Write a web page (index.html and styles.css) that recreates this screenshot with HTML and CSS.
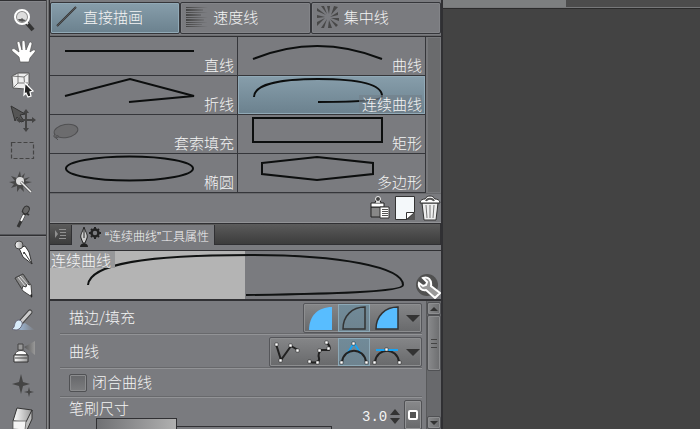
FILE: index.html
```html
<!DOCTYPE html>
<html lang="zh-CN">
<head>
<meta charset="utf-8">
<title>连续曲线</title>
<link rel="stylesheet" href="styles.css">
</head>
<body>
<svg class="defs" aria-hidden="true">
  <defs>
    <linearGradient id="metal"><stop offset="0" stop-color="#fff"/><stop offset="1" stop-color="#999"/></linearGradient>
    <linearGradient id="ink"><stop offset="0" stop-color="#444"/><stop offset="1" stop-color="#444" stop-opacity="0"/></linearGradient>
    <linearGradient id="wash"><stop offset="0" stop-color="#a9cdf5"/><stop offset="1" stop-color="#a9cdf5" stop-opacity="0"/></linearGradient>
    <linearGradient id="spray" x1="1" x2="0"><stop offset="0" stop-color="#999"/><stop offset="1" stop-color="#555"/></linearGradient>
  </defs>
</svg>
<div class="app">
  <nav class="toolbar" aria-label="工具">
    <div class="tools">
      <button aria-label="放大镜"><svg viewBox="0 0 33 33"><path d="M20 20l7 8" stroke="#333" stroke-width="4"/><path d="M20 20l2 2" stroke="#ddd" stroke-width="2"/><circle cx="16" cy="15" r="7" fill="#8d8d8d" stroke="#fff" stroke-width="2"/><circle cx="16" cy="15" r="5" fill="#ddd"/><path d="M12 17c1 3 5 4 8 1-2 0-3-1-4-2l-1 1z" fill="#555"/></svg></button>
      <button aria-label="抓手"><svg viewBox="0 0 33 33"><path d="M14 27l-1-5-7-6c-1-2 1-3 3-2l4 3-2-9c0-2 3-2 3 0l2 7V7c0-2 3-2 3 0l1 8 3-7c1-2 3-1 3 1l-2 8 3-2c2-1 3 1 2 2l-5 6-1 4z" fill="#fff" stroke="#555" stroke-width=".7"/></svg></button>
      <button aria-label="操作"><svg viewBox="0 0 33 33"><path d="M6 8l6-3h11v11l-4 5-12-1z" fill="#eee" stroke="#555"/><path d="M6 8l12 1 5-4M18 9l1 12M12 5v10l-5 5M12 15h10" fill="none" stroke="#777"/><path d="M19 15l8 8-3 1 1 4-3 1-2-4-2 2z" fill="#222" stroke="#fff" stroke-width="1.200"/></svg></button>
      <button aria-label="移动图层"><svg viewBox="0 0 33 33"><path d="M5 5l14 8-5 1 4 6-3 1-4-5-2 4z" fill="#555" stroke="#333"/><path d="M13 19h14M20 11v16" stroke="#444" stroke-width="2"/><path d="M20 8l3 4h-6zM20 31l3-4h-6zM10 19l4-3v6zM30 19l-4-3v6z" fill="#444"/></svg></button>
      <button aria-label="选区"><svg viewBox="0 0 33 33"><rect x="5.500" y="8.500" width="22" height="16" fill="none" stroke="#444" stroke-width="1.200" stroke-dasharray="4 2"/></svg></button>
      <button aria-label="自动选择"><svg viewBox="0 0 33 33"><path d="M14 4l1 6 4-4-2 6 7-2-5 4 7 1-7 2 4 4-6-2 1 6-4-4-3 4v-6l-6 2 3-4-5-2 6-1-4-5 6 2z" fill="#484848"/><circle cx="14" cy="14" r="4" fill="#ddd"/><path d="M15 15l10 10" stroke="#555" stroke-width="3"/><path d="M15 15l10 10" stroke="#eee" stroke-width="1.500"/></svg></button>
      <button aria-label="吸管"><svg viewBox="0 0 33 33"><path d="M19 13l-7 14" stroke="#333" stroke-width="3"/><path d="M18 15l-3 6" stroke="#fff" stroke-width="2"/><path d="M16 11l7 4" stroke="#333" stroke-width="2"/><ellipse cx="20" cy="10" rx="3" ry="4" fill="#666" stroke="#333" transform="rotate(30 20 10)"/></svg></button>
    </div>
    <div class="tools">
      <button aria-label="钢笔"><svg viewBox="0 0 33 33"><path d="M13 11l6-2 4 6 3 12-9-7z" fill="#fff" stroke="#333"/><path d="M18 15l8 12" stroke="#333"/><circle cx="18" cy="16" r="1" fill="#333"/><circle cx="13" cy="8" r="4" fill="url(#metal)" stroke="#444"/></svg></button>
      <button aria-label="铅笔"><svg viewBox="0 0 33 33"><path d="M9 8l8-4 8 11 1 12-9-6z" fill="#fff" stroke="#444"/><path d="M9 8l8-4 7 11-3-1-1 3-3-1-1 3z" fill="#888" stroke="#444"/><path d="M12 7l7 9M14 6l8 9" stroke="#ddd"/><path d="M24 25l2 3v-4z" fill="#222"/></svg></button>
      <button aria-label="毛笔"><svg viewBox="0 0 33 33"><path d="M7 25l12-5 10 7H15z" fill="url(#wash)"/><path d="M15 19L24 9" stroke="#444" stroke-width="5" stroke-linecap="round"/><path d="M15 19L24 9" stroke="#ccc" stroke-width="3" stroke-linecap="round"/><path d="M12 17c3 0 5 2 4 5-2 5-6 6-10 4 4-2 1-7 6-9z" fill="#d8ebfa" stroke="#667"/></svg></button>
      <button aria-label="喷枪"><svg viewBox="0 0 33 33"><path d="M18 11l11-6v14z" fill="url(#spray)"/><path d="M12 8h5v6h-5z" fill="#999" stroke="#444"/><path d="M9 19c0-6 12-6 12 0z" fill="#fff" stroke="#444"/><path d="M8 19h14v7H8z" fill="url(#metal)" stroke="#333"/><path d="M9 22h12" stroke="#444"/></svg></button>
      <button aria-label="装饰"><svg viewBox="0 0 33 33"><path d="M15 5l2 8 7 2-7 2-2 8-2-8-7-2 7-2zM23 18l1 4 4 1-4 1-1 4-1-4-4-1 4-1z" fill="#444"/></svg></button>
      <button aria-label="橡皮擦"><svg viewBox="0 0 33 33"><path d="M11 6l15 2-5 13-14-2z" fill="url(#metal)" stroke="#333"/><path d="M7 19l13 1 6-12v9l-5 11-14-1z" fill="#bbb" stroke="#333"/><path d="M7 19h13l-1 9-12-1z" fill="#f4f4f4" stroke="#777"/></svg></button>
    </div>
  </nav>

  <main class="panel">
    <div class="groups" role="tablist">
      <button class="group selected" role="tab" aria-selected="true"><svg viewBox="0 0 22 22"><path d="M1 20L20 1" stroke="#333" stroke-width="2"/><path d="M1 20L20 1" stroke="#555"/></svg>直接描画</button>
      <button class="group" role="tab"><svg viewBox="0 0 22 22"><path d="M0 1h22v1H0zM0 3h17v2H0zM0 6h22v1H0zM0 8h15v2H0zM0 11h22v1H0zM0 13h18v2H0zM0 16h21v1H0zM0 18h16v1H0zM0 20h22v1H0z" fill="url(#ink)"/></svg>速度线</button>
      <button class="group" role="tab"><svg viewBox="0 0 22 22"><path d="M10 0h3l-1 8zM17 0l4 1-7 8zM21 6v3l-8 2zM22 12v3l-8-3zM21 19l-2 2-6-8zM15 22h-4l1-8zM7 22H4l6-9zM0 20v-4l8-4zM0 12V9l8 2zM0 5V2l9 7zM4 0h3l3 8z" fill="#484848"/></svg>集中线</button>
    </div>

    <div class="library">
      <div class="shapes">
        <button class="shape"><svg viewBox="0 0 187 38"><path d="M15 14h129"/></svg><span>直线</span></button>
        <button class="shape"><svg viewBox="0 0 187 38"><path d="M15 22Q79-4 144 22"/></svg><span>曲线</span></button>
        <button class="shape"><svg viewBox="0 0 187 38"><path d="M15 20L80 3l64 17-65 6"/></svg><span>折线</span></button>
        <button class="shape selected"><svg viewBox="0 0 187 38"><path d="M16 21C16 9 40 3 80 3s64 5 64 17c0 5-29 6-64 6"/></svg><span>连续曲线</span></button>
        <button class="shape"><svg viewBox="0 0 187 38"><g class="lasso"><ellipse cx="16" cy="16" rx="12" ry="6.500" transform="rotate(-10 16 16)"/><path d="M5 19c-3 3 1 5 3 3s-3-2-2 1l2 2"/></g></svg><span>套索填充</span></button>
        <button class="shape"><svg viewBox="0 0 187 38"><path d="M15 3h129v24H15z"/></svg><span>矩形</span></button>
        <button class="shape"><svg viewBox="0 0 187 38"><ellipse cx="79.500" cy="14.500" rx="63.500" ry="12"/></svg><span>椭圆</span></button>
        <button class="shape"><svg viewBox="0 0 187 38"><path d="M24 9l55-6 56 6v11l-56 6-55-6z"/></svg><span>多边形</span></button>
      </div>
      <div class="rail"></div>
    </div>

    <div class="actions">
      <button aria-label="复制子工具"><svg viewBox="0 0 22 26"><path d="M2 12h13v10H2z" fill="#888" stroke="#222"/><path d="M2 8h13v4H2z" fill="#fff" stroke="#222"/><path d="M6 8l1-3h4l1 3" fill="#ccc" stroke="#222"/><circle cx="9" cy="4" r="2.500" fill="#444" stroke="#eee"/><path d="M11 12h9v11h-9z" fill="#fff" stroke="#333"/><path d="M13 14.500h6M13 16.500h6M13 18.500h6M13 20.500h6" stroke="#555"/></svg></button>
      <button aria-label="新建子工具"><svg viewBox="0 0 22 26"><path d="M1.500 1.500h19v16l-7 7h-12z" fill="#f4f8fa" stroke="#333"/><path d="M12.500 24.500v-7h8z" fill="#fff" stroke="#333"/><path d="M13 25l8-8v8z" fill="#555"/></svg></button>
      <button aria-label="删除子工具"><svg viewBox="0 0 22 26"><path d="M3 8h16l-2 17H5z" fill="#eee" stroke="#333"/><path d="M7 10l1 13M11 10v13M15 10l-1 13" stroke="#777"/><path d="M1 8c0-3 3-4 5-4 2-4 8-4 10 0 2 0 5 1 5 4z" fill="#fff" stroke="#333"/><path d="M7 6c1-3 7-3 8 0" fill="none" stroke="#555" stroke-width="2"/></svg></button>
    </div>

    <header class="titlebar">
      <button class="menu" aria-label="菜单"><svg viewBox="0 0 12 12"><path d="M0 2l3 4-3 4zM4 1h7v1H4zM5 4h6v1H5zM5 7h6v1H5zM4 10h7v1H4z" fill="#909090"/></svg></button>
      <h1 class="title"><svg viewBox="0 0 24 22"><path d="M6 2C4 8 2 10 3 13l2 5h2l2-5c1-3-1-5-3-11z" fill="#ccc" stroke="#222"/><path d="M6 4v9" stroke="#222"/><path d="M2 22c0-5 8-5 8 0z" fill="#222"/><circle cx="17" cy="8" r="3.500" fill="none" stroke="#222" stroke-width="2.500"/><path d="M17 2v2M17 12v2M11 8h2M21 8h2M13 4l1 1M20 11l1 1M21 4l-1 1M14 11l-1 1" stroke="#222" stroke-width="2"/></svg><span>“连续曲线”工具属性</span></h1>
    </header>

    <section class="preview">
      <svg class="stroke" viewBox="0 0 391 48"><path d="M38 34C40 12 100 4 200 4c90 0 153 12 153 30 0 7-73 9-157 10"/></svg>
      <span class="name">连续曲线</span>
      <button class="wrench" aria-label="详细设置"><svg viewBox="0 0 26 26"><circle cx="12" cy="12" r="11" fill="#505050"/><path d="M8 5l4 4-1 3-3 1-4-3c-1 5 3 8 7 7l9 8 5-5-9-7c1-6-3-10-8-8z" fill="#999" stroke="#fff" stroke-width="2"/></svg></button>
    </section>

    <section class="properties">
      <div class="rows">
        <div class="row">
          <span class="label">描边/填充</span>
          <div class="options">
            <button aria-label="填充"><svg viewBox="0 0 32 28"><path d="M27 3v23H4C4 12 13 3 27 3z" fill="#58bdff"/></svg></button>
            <button class="on" aria-label="描边"><svg viewBox="0 0 32 28"><path d="M27 3v22H5C5 12 14 3 27 3z" fill="none" stroke="#333" stroke-width="1.500"/></svg></button>
            <button aria-label="描边和填充"><svg viewBox="0 0 32 28"><path d="M27 3v22H5C5 12 14 3 27 3z" fill="#58bdff" stroke="#333" stroke-width="1.500"/></svg></button>
            <button class="more" aria-label="更多"><svg viewBox="0 0 16 28"><path d="M1 11h14l-7 7z" fill="#333"/></svg></button>
          </div>
        </div>
        <div class="row">
          <span class="label">曲线</span>
          <div class="options">
            <button aria-label="直线"><svg viewBox="0 0 32 28"><path d="M5 6l5 16L20 8l7 4" class="wire"/><path d="M4 5h3v3H4zM8 21h3v3H8zM18 6h3v3h-3zM25 11h3v3h-3z" fill="#fff" stroke="#222" stroke-width=".5"/></svg></button>
            <button aria-label="样条"><svg viewBox="0 0 32 28"><path d="M5 24c5 1 10 1 9-4-1-3 0-6 2-8h8c2-3 0-5-3-8" class="wire"/><path d="M3 22h3v3H3zM11 23h3v3h-3zM13 11h3v3h-3zM22 9h3v3h-3zM20 3h3v3h-3z" fill="#fff" stroke="#222" stroke-width=".5"/></svg></button>
            <button class="on" aria-label="二次贝塞尔"><svg viewBox="0 0 32 28"><path d="M9 16l7-11 7 11" fill="none" stroke="#18a4f4" stroke-width="2"/><path d="M4 24C6 9 26 9 28 24" class="wire"/><path d="M2 23h3v3H2zM27 23h3v3h-3zM14 4h3v3h-3z" fill="#fff" stroke="#222" stroke-width=".5"/></svg></button>
            <button aria-label="三次贝塞尔"><svg viewBox="0 0 32 28"><path d="M4 24C6 9 26 9 28 24" class="wire"/><path d="M5 12h22" stroke="#18a4f4" stroke-width="2"/><path d="M2 23h3v3H2zM27 23h3v3h-3zM14 10h3v3h-3z" fill="#fff" stroke="#222" stroke-width=".5"/></svg></button>
            <button class="more" aria-label="更多"><svg viewBox="0 0 16 28"><path d="M1 11h14l-7 7z" fill="#333"/></svg></button>
          </div>
        </div>
        <div class="row check">
          <input type="checkbox" id="close-curve"><label for="close-curve">闭合曲线</label>
        </div>
        <div class="row size">
          <div class="brush">
            <label for="brush-range">笔刷尺寸</label>
            <input type="range" id="brush-range" min="0" max="100" value="34">
          </div>
          <input class="number" type="text" value="3.0" aria-label="笔刷尺寸数值">
          <div class="stepper">
            <button aria-label="增加"><svg viewBox="0 0 10 6"><path d="M0 6l5-6 5 6z" fill="#333"/></svg></button>
            <button aria-label="减少"><svg viewBox="0 0 10 6"><path d="M0 0l5 6 5-6z" fill="#333"/></svg></button>
          </div>
          <button class="dynamics" aria-label="笔刷尺寸影响源"><svg viewBox="0 0 12 12"><rect x="2" y="2" width="8" height="8" rx="1" fill="#555" stroke="#fff" stroke-width="2"/></svg></button>
        </div>
      </div>
      <div class="scrollbar">
        <button aria-label="向上滚动"><svg viewBox="0 0 10 6"><path d="M1 5l4-4 4 4z" fill="#333"/></svg></button>
        <div class="thumb"><i></i></div>
        <div class="track"></div>
        <button aria-label="向下滚动"><svg viewBox="0 0 10 6"><path d="M1 1l4 4 4-4z" fill="#333"/></svg></button>
      </div>
    </section>
  </main>

  <section class="workspace" aria-label="画布"><div class="document"></div></section>
</div>
</body>
</html>
```
FILE: styles.css
```css
* { box-sizing: border-box; }

body {
  margin: 0;
  background: #434343;
  color: #f4f4f4;
  font: 300 15px/18px "Noto Sans CJK SC", sans-serif;
}

button, input { font: inherit; color: inherit; margin: 0; }
button { padding: 0; border: 0; background: none; }
svg { display: block; }
.defs { position: absolute; width: 0; height: 0; }

.app {
  display: grid;
  grid-template-columns: 50px 391px 1fr;
  height: 100vh;
  overflow: hidden;
}

/* Tool column */
.toolbar {
  background: #7a7b7f;
  border-right: 1px solid #303033;
  box-shadow: inset -1px 0 #6a6a6c, inset -2px 0 #88898b, inset -3px 0 #4a4a4c;
  overflow: hidden;
}
.tools {
  margin-right: 3px;
  padding: 1px 7px 1px 6px;
  border-top: 1px solid #303033;
  box-shadow: inset 0 1px #85868a;
  display: grid;
  grid-auto-rows: 33px;
}
.tools:first-child { border-bottom: 1px solid #55565a; }
.tools svg { width: 33px; height: 33px; }

/* Centre panel */
.panel {
  background: #7a7b7f;
  display: flex;
  flex-direction: column;
  min-height: 0;
  overflow: hidden;
}
.groups {
  display: grid;
  grid-template-columns: repeat(3, 1fr);
  height: 36px;
  flex: none;
  padding: 2px 0 1px;
  border-bottom: 1px solid #6a6b6e;
}
.group {
  display: flex;
  align-items: center;
  gap: 5px;
  padding: 0 5px 2px;
  border: 1px solid #35363a;
  border-radius: 2px;
  box-shadow: inset 0 0 0 1px #838488;
}
.group svg { width: 22px; height: 22px; }
.selected { background: linear-gradient(#879eab, #6b818e); }
.group.selected { box-shadow: inset 0 0 0 1px #91a9b6; }

.library {
  display: grid;
  grid-template-columns: 1fr 15px;
  flex: none;
  border-top: 1px solid #303033;
}
.shapes {
  display: grid;
  grid-template-columns: 1fr 1fr;
  grid-auto-rows: 39px;
}
.shape {
  position: relative;
  border: solid #35363a;
  border-width: 0 1px 1px 0;
}
.shape svg {
  width: 187px;
  height: 38px;
  fill: none;
  stroke: #0c0e0e;
  stroke-width: 2;
}
.shape .lasso { fill: #6c6c6e; stroke: #505052; stroke-width: 1; }
.shape span {
  position: absolute;
  right: 3px;
  bottom: 1px;
  padding-left: 3px;
}
.shape.selected { box-shadow: inset 0 0 0 1px #91a9b6; }
.shape.selected span { background: #72808aaa; }
.rail {
  background: #6a6b6d;
  border: solid #77787b;
  border-width: 1px 1px 1px 2px;
}

.actions {
  display: flex;
  justify-content: flex-end;
  align-items: center;
  gap: 3px;
  height: 30px;
  flex: none;
  border-top: 1px solid #68696c;
  border-bottom: 1px solid #929396;
}
.actions svg { width: 22px; height: 26px; }

.titlebar {
  display: flex;
  height: 22px;
  flex: none;
  border: 1px solid #303033;
  border-left: 0;
  background: linear-gradient(#5b5b5b, #3c3c3c);
}
.menu { width: 21px; padding-left: 5px; }
.menu svg { width: 12px; height: 12px; }
.title {
  display: flex;
  align-items: flex-start;
  gap: 3px;
  margin: 1px 0 -1px;
  padding: 0 5px 0 6px;
  border-left: 1px solid #303033;
  border-right: 1px solid #303033;
  background: #7a7b7f;
  font: 300 12px/20px "Liberation Sans", "Noto Sans CJK SC", sans-serif;
}
.title span { padding-top: 2px; }
.title svg { width: 24px; height: 22px; }

.preview {
  position: relative;
  height: 51px;
  flex: none;
  margin-top: 5px;
  border-top: 1px solid #303033;
  border-bottom: 2px solid #303033;
  background: linear-gradient(90deg, #b4b4b4 50%, #7a7b7f 50%);
}
.stroke { width: 391px; height: 48px; fill: none; stroke: #101212; stroke-width: 2; }
.name {
  position: absolute;
  left: 0;
  top: 0;
  padding: 0 4px 0 1px;
  line-height: 17px;
  background: #969799;
}
.wrench { position: absolute; right: 0; bottom: 0; }
.wrench svg { width: 26px; height: 26px; }

/* Tool properties */
.properties {
  display: grid;
  grid-template-columns: 1fr 15px;
  flex: 1;
  min-height: 0;
}
.rows { padding: 0 4px 0 10px; min-width: 0; }
.row {
  display: flex;
  align-items: center;
  height: 34px;
  padding-left: 9px;
  border-bottom: 1px solid #929396;
  box-shadow: inset 0 -1px #68696c;
}
.row .label { padding-bottom: 2px; }
.options {
  display: flex;
  margin-left: auto;
  height: 30px;
  border: 1px solid #55565a;
  border-radius: 2px;
  background: linear-gradient(#858688, #68696b);
  box-shadow: inset 0 0 0 1px #8d8e90;
}
.options button { width: 34px; padding: 0 1px; }
.options .on { width: 32px; padding: 0; background: linear-gradient(#718b99, #6e838f); box-shadow: inset 0 0 0 1px #8da9b7; }
.options .more { width: 17px; }
.options svg { width: 32px; height: 28px; }
.options .more svg { width: 16px; }
.wire { fill: none; stroke: #222; stroke-width: 2; }

.check { height: 29px; gap: 5px; }
.check label { padding-bottom: 2px; }
.check input {
  appearance: none;
  width: 18px;
  height: 18px;
  border: 1px solid #505154;
  border-radius: 2px;
  background: linear-gradient(#66676a, #7c7d7f);
  box-shadow: inset 0 0 0 1px #8b8c8e;
}

.size {
  align-items: flex-start;
  height: 32px;
  border: 0;
  box-shadow: none;
}
.brush { flex: 1; min-width: 0; }
.brush label { display: block; line-height: 20px; }
.brush input {
  appearance: none;
  display: block;
  width: 236px;
  height: 14px;
  margin-left: 27px;
  border-right: 1px solid #303033;
  background:
    linear-gradient(90deg, #707174, #b0b0b0) 1px 1px / 79px 12px no-repeat,
    linear-gradient(#303033, #303033) 0 0 / 81px 14px no-repeat,
    linear-gradient(#303033, #303033) 0 8px / 100% 1px no-repeat;
  clip-path: polygon(0 0, 81px 0, 81px 8px, 100% 8px, 100% 100%, 0 100%);
}
.brush input::-webkit-slider-thumb { appearance: none; width: 1px; height: 14px; }
.number {
  width: 28px;
  height: 20px;
  margin-top: 9px;
  padding: 0;
  border: 0;
  background: none;
  font: 14px/20px "Liberation Mono", monospace;
}
.stepper { display: grid; gap: 3px; margin: 11px 4px 0 0; }
.stepper svg { width: 10px; height: 6px; }
.dynamics {
  display: grid;
  place-items: center;
  width: 18px;
  height: 30px;
  margin-top: 2px;
  border: 1px solid #505154;
  border-radius: 2px;
  background: linear-gradient(#88898b, #68696b);
  box-shadow: inset 0 0 0 1px #929395;
}
.dynamics svg { width: 12px; height: 12px; }

.scrollbar {
  display: flex;
  flex-direction: column;
  padding: 1px 0;
  border-left: 1px solid #58595b;
  background: #68696c;
}
.scrollbar button, .thumb {
  display: grid;
  place-items: center;
  height: 13px;
  border: 1px solid #505154;
  border-radius: 2px;
  background: linear-gradient(90deg, #898a8c, #6c6d6f);
  box-shadow: inset 0 0 0 1px #8d8e90;
}
.scrollbar svg { width: 10px; height: 6px; }
.thumb { height: 56px; }
.thumb i {
  width: 6px;
  height: 9px;
  background: repeating-linear-gradient(#444 0 1px, transparent 1px 4px);
}
.track { flex: 1; }

/* Document area */
.workspace {
  border-left: 2px solid #303033;
  background: #434343;
}
.document {
  height: 9px;
  border-bottom: 1px solid #2b2b2b;
  background: linear-gradient(#77787a, #77787a) 0 7px / 100% 1px no-repeat,
    linear-gradient(90deg, #7d7f80 48%, #4c4c4c 48%);
}
```
